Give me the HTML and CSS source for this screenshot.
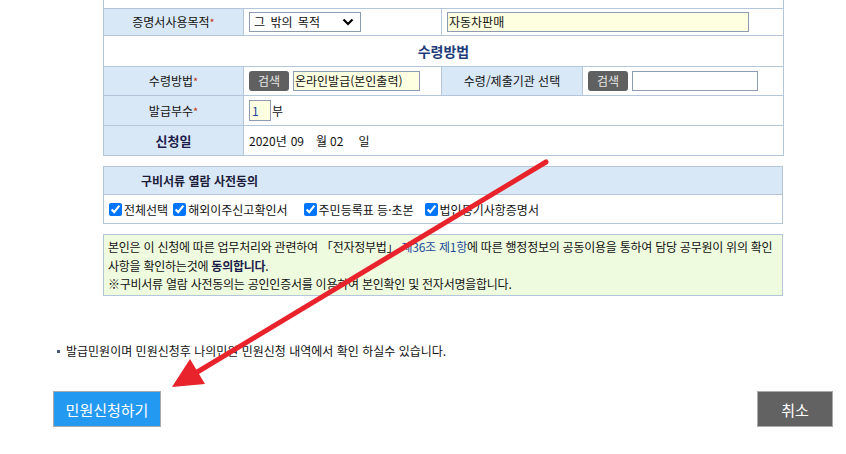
FILE: index.html
```html
<!DOCTYPE html>
<html lang="ko">
<head>
<meta charset="utf-8">
<title>민원신청</title>
<link rel="stylesheet" href="styles.css">
</head>
<body>
<div class="page">
  <div class="content">
    <table class="form">
      <colgroup><col class="c1"><col class="c2"><col class="c3"><col class="c4"></colgroup>
      <tr class="r0"><td colspan="4"></td></tr>
      <tr class="r1">
        <th>증명서사용목적<span class="req">*</span></th>
        <td><div class="select"><span>그 밖의 목적</span><svg width="12" height="8" viewBox="0 0 12 8"><path d="M1.5 1.5 L6 6 L10.5 1.5" fill="none" stroke="#000" stroke-width="2.2"/></svg></div></td>
        <td colspan="2"><div class="text-input purpose">자동차판매</div></td>
      </tr>
      <tr class="r2"><td colspan="4" class="section">수령방법</td></tr>
      <tr class="r3">
        <th>수령방법<span class="req">*</span></th>
        <td><div class="inline"><span class="btn-search">검색</span><span class="text-input recv">온라인발급(본인출력)</span></div></td>
        <th>수령/제출기관 선택</th>
        <td><div class="inline"><span class="btn-search">검색</span><span class="text-input org"></span></div></td>
      </tr>
      <tr class="r4">
        <th>발급부수<span class="req">*</span></th>
        <td colspan="3"><div class="inline"><span class="num">1</span><span>부</span></div></td>
      </tr>
      <tr class="r5">
        <th class="strong">신청일</th>
        <td colspan="3"><span class="date">2020년</span><span class="d2">09</span><span class="d3">월</span><span class="d4">02</span><span class="d5">일</span></td>
      </tr>
    </table>

    <div class="consent">
      <div class="consent-head">구비서류 열람 사전동의</div>
      <div class="consent-body">
        <label class="chk"><input type="checkbox" checked>전체선택</label>
        <label class="chk"><input type="checkbox" checked>해외이주신고확인서</label>
        <label class="chk"><input type="checkbox" checked>주민등록표 등·초본</label>
        <label class="chk"><input type="checkbox" checked>법인등기사항증명서</label>
      </div>
    </div>

    <div class="notice">
      본인은 이 신청에 따른 업무처리와 관련하여 「전자정부법」 <span class="law">제36조 제1항</span>에 따른 행정정보의 공동이용을 통하여 담당 공무원이 위의 확인 사항을 확인하는것에 <b>동의합니다</b>.<br>
      ※구비서류 열람 사전동의는 공인인증서를 이용하여 본인확인 및 전자서명을합니다.
    </div>
  </div>

  <p class="footnote"><span class="bullet"></span>발급민원이며 민원신청후 나의민원 민원신청 내역에서 확인 하실수 있습니다.</p>

  <div class="actions">
    <button class="btn-primary">민원신청하기</button>
    <button class="btn-cancel">취소</button>
  </div>

  <svg class="arrow" width="846" height="454" viewBox="0 0 846 454">
    <line x1="546" y1="162" x2="194" y2="374" stroke="#e8232b" stroke-width="5" stroke-linecap="round"/>
    <polygon points="172,387 190,359 205,384" fill="#e8232b"/>
  </svg>
</div>
</body>
</html>
```

FILE: styles.css
```css
html, body {
  margin: 0;
  padding: 0;
  background: #fff;
}
body {
  font-family: "Noto Sans CJK KR", "Noto Sans", sans-serif;
  font-size: 12px;
  color: #111;
}
.page {
  position: relative;
  width: 846px;
  height: 454px;
  overflow: hidden;
}
.content {
  padding-left: 103px;
  width: 680px;
}
.form {
  width: 680px;
  border-collapse: collapse;
  table-layout: fixed;
}
.form col.c1 { width: 140px; }
.form col.c2 { width: 198px; }
.form col.c3 { width: 141px; }
.form col.c4 { width: 201px; }
.form th, .form td {
  border: 1px solid #b4c7da;
  padding: 0;
  font-weight: normal;
  line-height: 14px;
}
.form th {
  background: #d9e8f6;
  text-align: center;
}
.form td {
  padding-left: 5px;
}
.form .r0 td { border-top: none; height: 8px; }
.form .r1 th, .form .r1 td { height: 26px; }
.form .r2 td { height: 30px; }
.form .r3 th, .form .r3 td { height: 28px; }
.form .r4 th, .form .r4 td { height: 29px; }
.form .r5 th, .form .r5 td { height: 29px; }
.req {
  color: #c4381e;
  font-size: 11px;
}
.form th.strong {
  font-weight: bold;
  color: #1c1c4a;
  font-size: 13px;
}
.form td.section {
  text-align: center;
  font-weight: bold;
  font-size: 14px;
  color: #1e3c78;
  padding-left: 0;
}
.select {
  box-sizing: border-box;
  width: 112px;
  height: 20px;
  border: 1px solid #8e9cb2;
  display: flex;
  align-items: center;
  justify-content: space-between;
  padding: 0 6px 0 4px;
  font-size: 12px;
  word-spacing: 2px;
}
.text-input {
  box-sizing: border-box;
  display: block;
  height: 20px;
  border: 1px solid #8e9cb2;
  background: #fdffe0;
  line-height: 18px;
  padding-left: 1px;
  font-size: 12px;
}
.purpose {
  width: 302px;
}
.inline {
  display: flex;
  align-items: center;
  gap: 4px;
}
.btn-search {
  display: inline-block;
  box-sizing: border-box;
  width: 40px;
  height: 20px;
  line-height: 20px;
  text-align: center;
  background: #606060;
  color: #e6e6e6;
  border-radius: 3px;
  font-size: 12px;
}
.recv {
  width: 127px;
}
.org {
  width: 126px;
  background: #fff;
}
.num {
  box-sizing: border-box;
  display: inline-block;
  width: 22px;
  height: 21px;
  border: 1px solid #8e9cb2;
  background: #fdffe0;
  color: #1a3f9a;
  line-height: 19px;
  padding-left: 2px;
  margin-right: -3px;
}
.d2 { margin-left: 4px; }
.d3 { margin-left: 12px; }
.d4 { margin-left: 3px; }
.d5 { margin-left: 15px; }

.consent {
  margin-top: 10px;
  border: 1px solid #b4c7da;
}
.consent-head {
  background: #d9e8f6;
  height: 27px;
  line-height: 27px;
  padding-left: 37px;
  font-weight: bold;
  font-size: 12px;
  color: #1c1c3a;
  border-bottom: 1px solid #b4c7da;
}
.consent-body {
  height: 28px;
  display: flex;
  align-items: center;
  padding-left: 2px;
}
.chk {
  display: inline-flex;
  align-items: center;
  margin-right: 2px;
}
.chk input {
  width: 13px;
  height: 13px;
  margin: 0 2px 0 3px;
}
.chk:nth-child(3) {
  margin-left: 11px;
}
.chk:nth-child(4) {
  margin-left: 6px;
}

.notice {
  margin-top: 10px;
  box-sizing: border-box;
  height: 62px;
  border: 1px solid #b4c7da;
  background: #effbdf;
  padding: 3px 4px 0 4px;
  line-height: 18.5px;
  font-size: 12px;
  letter-spacing: -0.25px;
  word-break: keep-all;
}
.notice .law {
  color: #1d4b9b;
}
.notice b {
  color: #1c1c4a;
}

.footnote {
  margin: 48px 0 0 0;
  padding-left: 57px;
  display: flex;
  align-items: center;
  font-size: 12px;
  line-height: 14px;
}
.bullet {
  display: inline-block;
  width: 3px;
  height: 3px;
  background: #4a5a7a;
  margin-right: 6px;
}

.actions {
  margin-top: 33px;
  margin-left: 53px;
  width: 780px;
  display: flex;
  justify-content: space-between;
}
.actions button {
  font-family: "Noto Sans CJK KR", "Noto Sans", sans-serif;
  font-size: 15px;
  color: #fff;
  height: 36px;
  border: 1px solid #aaaaaa;
  padding: 0;
  cursor: pointer;
}
.btn-primary {
  width: 108px;
  background: #2399f1;
}
.btn-cancel {
  width: 76px;
  background: #626262;
}

.arrow {
  position: absolute;
  left: 0;
  top: 0;
  pointer-events: none;
}
```
